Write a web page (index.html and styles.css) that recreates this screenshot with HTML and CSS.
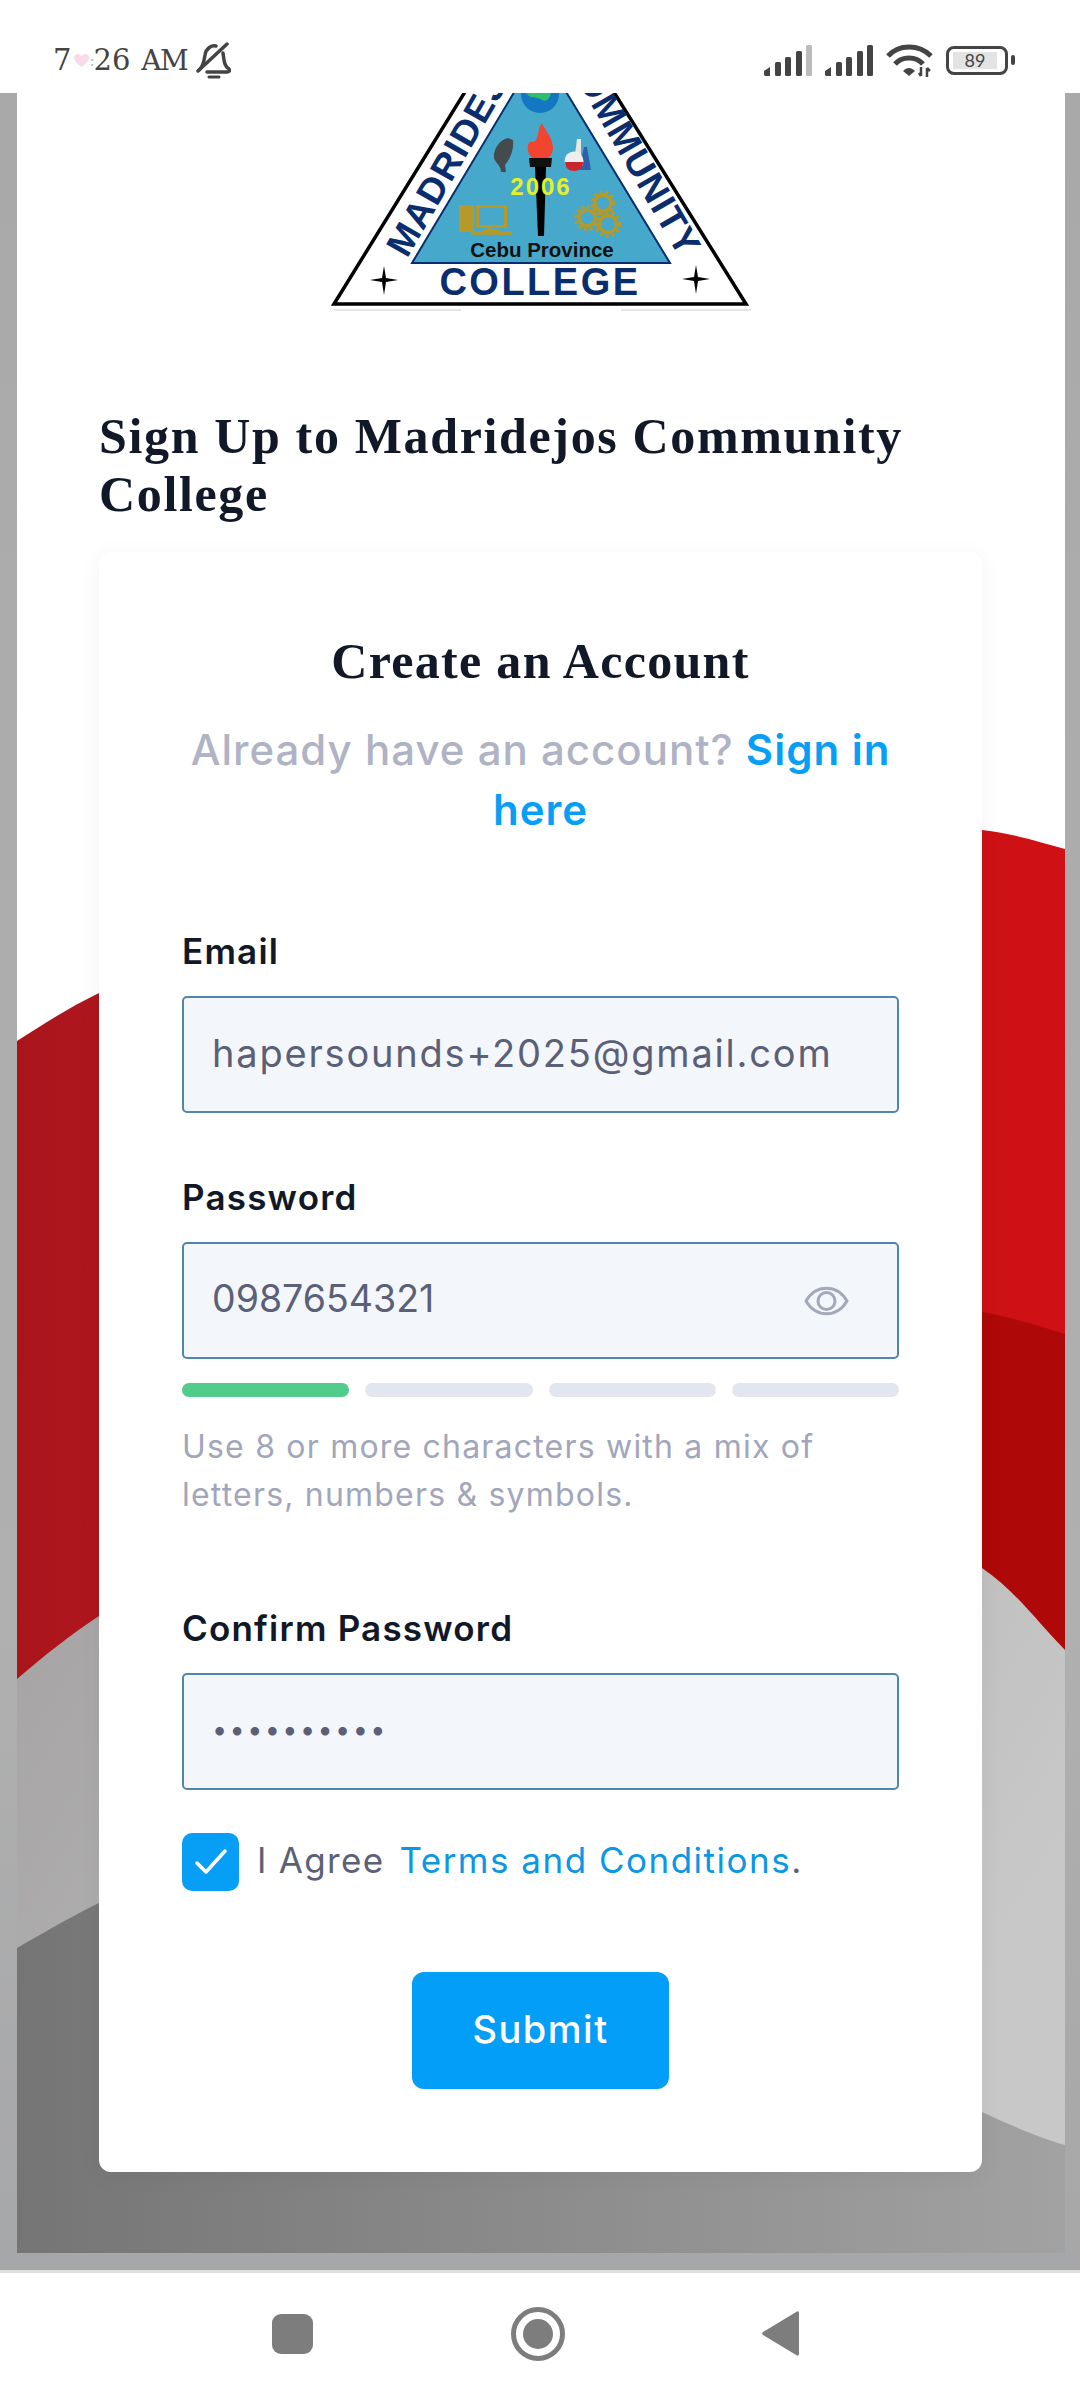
FILE: index.html
```html
<!DOCTYPE html>
<html lang="en">
  <head>
    <title>Sign Up</title>
    <meta charset="utf-8" />
    <link rel="stylesheet" href="styles.css">
  </head>
  <body>
    <div class="phone">
      <div class="status">
        <div class="clock">
          <span>7</span>
          <svg class="heart" width="15" height="14" viewBox="0 0 15 14"><path d="M7.5 14C2 10 0 7.500 0 4.300 0 1.500 3.800-1 7.500 3 11.200-1 15 1.500 15 4.300 15 7.500 13 10 7.500 14Z" fill="#f8dbe8"/></svg>
          <span class="colon">:</span>
          <span>26</span>
          <span class="ampm">AM</span>
          <svg class="bell" width="35" height="37" viewBox="0 0 35 37" fill="none" stroke="#444" stroke-width="3.500" stroke-linecap="round">
            <path d="M3 28C8 24 8 18 9 13 10 6 16 3 20 4"/>
            <path d="M27 11C28 18 28 24 33 27 34 29 33 30 31 30H11"/>
            <path d="M2 29 31 2"/>
            <path d="M13 35H23" stroke-width="3"/>
          </svg>
        </div>
        <div class="status-icons">
          <svg width="48" height="31" viewBox="0 0 48 31" fill="#444">
            <path d="M0 26 6 22V31H1L0 30Z"/>
            <rect x="11" y="17" width="6" height="14" rx="1.500"/>
            <rect x="21" y="12" width="6" height="19" rx="1.500"/>
            <rect x="32" y="6" width="6" height="25" rx="1.500"/>
            <rect x="42" y="0" width="6" height="31" rx="1.500" fill="#bbb"/>
          </svg>
          <svg width="48" height="31" viewBox="0 0 48 31" fill="#444">
            <path d="M0 26 6 22V31H1L0 30Z"/>
            <rect x="11" y="17" width="6" height="14" rx="1.500"/>
            <rect x="21" y="12" width="6" height="19" rx="1.500"/>
            <rect x="32" y="6" width="6" height="25" rx="1.500"/>
            <rect x="42" y="0" width="6" height="31" rx="1.500"/>
          </svg>
          <svg width="47" height="34" viewBox="0 0 47 34" fill="none" stroke="#444" stroke-width="5">
            <path d="M2 13C13 1 33 1 45 13"/>
            <path d="M9 21C16 13 30 13 37 21"/>
            <path d="M17 28 23 33 29 28C25 24 21 24 17 28Z" fill="#444" stroke="none"/>
            <path d="M35 24V33M33 30 35 33M41 34V25M41 25 44 28" stroke-width="2.500"/>
          </svg>
          <div class="battery">
            <div class="battery-body"><span class="battery-level">89</span></div>
            <div class="battery-nub"></div>
          </div>
        </div>
      </div>

      <div class="main">
        <div class="panel">
          <svg class="backdrop" viewBox="17 93 1048 2160" preserveAspectRatio="none">
            <defs>
              <linearGradient id="redFill" x1="0" y1="0" x2="1" y2="0">
                <stop offset="0" stop-color="#a9151b"/>
                <stop offset="0.1" stop-color="#b0171d"/>
                <stop offset="0.9" stop-color="#cc1216"/>
                <stop offset="1" stop-color="#d01014"/>
              </linearGradient>
              <linearGradient id="grayFill" x1="0" y1="0" x2="1" y2="0.4">
                <stop offset="0" stop-color="#a5a3a3"/>
                <stop offset="1" stop-color="#c8c8c8"/>
              </linearGradient>
              <linearGradient id="darkFill" x1="0" y1="0" x2="1" y2="0">
                <stop offset="0" stop-color="#757575"/>
                <stop offset="1" stop-color="#a2a2a2"/>
              </linearGradient>
            </defs>
            <rect x="17" y="93" width="1048" height="2160" fill="#fff"/>
            <path d="M17 1041C45 1023 70 1007 99 993L982 830C1015 834 1040 842 1065 849V1700H17Z" fill="url(#redFill)"/>
            <path d="M800 1296C880 1291 980 1306 1065 1334V1700H800Z" fill="#af0808"/>
            <path d="M17 1679C45 1655 70 1635 99 1616L982 1568C1015 1590 1040 1625 1065 1650V2253H17Z" fill="url(#grayFill)"/>
            <path d="M17 1948C45 1932 70 1917 99 1903L982 2112C1010 2125 1040 2138 1065 2145V2253H17Z" fill="url(#darkFill)"/>
          </svg>

          <svg class="logo" width="420" height="222" viewBox="330 93 420 222">
            <path d="M538-28 745 304H333Z" fill="#fff" stroke="#000" stroke-width="3.500"/>
            <path d="M539 49 669 263H411Z" fill="#46a9cb" stroke="#0a2d6e" stroke-width="2"/>
            <circle cx="539" cy="94" r="19" fill="#1477c4"/>
            <path d="M525 93H550C548 100 545 102 541 100 536 96 530 100 525 93Z" fill="#2fbf6c"/>
            <text class="logo-side" transform="translate(406 259) rotate(-60)">MADRIDEJOS</text>
            <text class="logo-side" text-anchor="end" transform="translate(679 259) rotate(60)">COMMUNITY</text>

            <path d="M541 123C544 131 551 136 552 147 552 153 549 158 546 158H532C528 156 526 150 527 145 529 139 533 144 535 140 538 134 537 128 541 123Z" fill="#f2452f"/>
            <path d="M528 158H551L550 167H529Z" fill="#111"/>
            <path d="M534 167H545L543 236H537Z" fill="#000"/>

            <path d="M507 138C498 140 492 150 493 158 494 163 500 165 500 172L505 172 504 165C510 158 513 148 512 140Z" fill="#444b4e"/>

            <path d="M576 139H580V170H572Z" fill="#e8e8e0"/>
            <path d="M583 147H586L590 170H578Z" fill="#2f5eaa"/>
            <circle cx="573" cy="161" r="9.500" fill="#eeeeee"/>
            <path d="M564 162H582C582 168 578 171 573 171 568 171 564 168 564 162Z" fill="#c9252b"/>

            <g fill="none" stroke="#b59a2a" stroke-width="3">
              <rect x="476.500" y="206.500" width="28" height="20"/>
              <path d="M470 233H511" stroke-width="3.500"/>
              <path d="M488 227V232M482 231H498"/>
              <circle cx="602" cy="203" r="8" stroke-width="3.500"/>
              <circle cx="602" cy="203" r="11" stroke-width="3" stroke-dasharray="3 3"/>
              <circle cx="586" cy="218" r="8" stroke-width="3.500"/>
              <circle cx="586" cy="218" r="11.500" stroke-width="3" stroke-dasharray="3 3"/>
              <circle cx="607" cy="224" r="8.500" stroke-width="3.500"/>
              <circle cx="607" cy="224" r="12" stroke-width="3" stroke-dasharray="3 3"/>
            </g>
            <rect x="458" y="205" width="15" height="27" fill="#b59a2a"/>

            <text class="logo-year" x="540" y="195" text-anchor="middle">2006</text>
            <text class="logo-place" x="541" y="257" text-anchor="middle">Cebu Province</text>
            <text class="logo-college" x="539" y="295" text-anchor="middle">COLLEGE</text>

            <path d="M383 266 385 278 397 280 385 282 383 295 381 282 369 280 381 278Z" fill="#000"/>
            <path d="M695 265 697 277 709 279 697 281 695 294 693 281 681 279 693 277Z" fill="#000"/>
            <path d="M333 310H460M620 310H750" stroke="#ddd" stroke-width="1.500"/>
          </svg>

          <h1 class="page-title">Sign Up to Madridejos Community College</h1>

          <div class="card">
            <h2 class="card-title">Create an Account</h2>
            <p class="card-sub">Already have an account? <a class="sign-in" href="#">Sign in here</a></p>

            <div class="label label-email">Email</div>
            <div class="input input-text">hapersounds+2025@gmail.com</div>

            <div class="label label-password">Password</div>
            <div class="input input-eye">
              <span>0987654321</span>
              <svg width="45" height="32" viewBox="0 0 45 32" fill="none" stroke="#a4a8ba" stroke-width="3">
                <path d="M2 16C12-1 33-1 43 16 33 33 12 33 2 16Z"/>
                <circle cx="22.500" cy="16" r="8.500"/>
              </svg>
            </div>
            <div class="meter">
              <div class="meter-bar meter-on"></div>
              <div class="meter-bar"></div>
              <div class="meter-bar"></div>
              <div class="meter-bar"></div>
            </div>
            <p class="hint">Use 8 or more characters with a mix of letters, numbers &amp; symbols.</p>

            <div class="label label-confirm">Confirm Password</div>
            <div class="input input-dots">••••••••••</div>

            <div class="agree">
              <div class="checkbox">
                <svg width="34" height="30" viewBox="0 0 34 30" fill="none" stroke="#fff" stroke-width="3.500" stroke-linecap="round" stroke-linejoin="round"><path d="M3 16 12 25 31 4"/></svg>
              </div>
              <span class="agree-text">I Agree</span>
              <span class="agree-link"><a href="#">Terms and Conditions</a>.</span>
            </div>

            <div class="submit-row">
              <button class="submit">Submit</button>
            </div>
          </div>
        </div>
      </div>

      <div class="nav">
        <div class="nav-square"></div>
        <div class="nav-circle"><div class="nav-dot"></div></div>
        <svg width="37" height="45" viewBox="0 0 37 45"><path d="M35 0.500C36 0 37 1 37 2V43C37 44 36 45 35 44.500L1 24C0 23 0 22 1 21Z" fill="#7d7d7d"/></svg>
      </div>
    </div>
  </body>
</html>
```

FILE: styles.css
```css
html {
  height: 100%;
}
body {
  margin: 0;
  padding: 0;
  background: #fff;
  font-family: "Inter", "Liberation Sans", sans-serif;
}

.phone {
  width: 1080px;
  height: 2400px;
  display: flex;
  flex-direction: column;
  overflow: hidden;
}

/* status bar */
.status {
  height: 93px;
  box-sizing: border-box;
  flex: none;
  padding: 27px 65px 0 53px;
  display: flex;
  align-items: center;
  justify-content: space-between;
  background: #fff;
  color: #444;
}
.clock {
  display: flex;
  align-items: center;
  font: 29px "DejaVu Serif", serif;
}
.heart {
  margin: 0 0 0 3px;
}
.colon {
  font-size: 16px;
  color: #bbb;
  width: 4px;
}
.ampm {
  margin-left: 11px;
  letter-spacing: -1.500px;
  font-size: 28px;
}
.bell {
  margin-left: 9px;
}
.status-icons {
  display: flex;
  align-items: center;
  gap: 13px;
}
.battery {
  display: flex;
  align-items: center;
  gap: 3px;
}
.battery-body {
  width: 62px;
  height: 29px;
  box-sizing: border-box;
  border: 3px solid #444;
  border-radius: 8px;
  padding: 3px 8px 3px 4px;
  display: flex;
}
.battery-level {
  flex: 1;
  background: #e3e3e3;
  font: 18px/17px "Lato", sans-serif;
  text-align: center;
  color: #444;
}
.battery-nub {
  width: 4px;
  height: 10px;
  background: #444;
  border-radius: 2px;
}

/* page */
.main {
  flex: 1;
  padding: 0 15px 17px 17px;
  background: linear-gradient(#a9a9a9, #b0b0b0 70%, #a6a7a9);
}
.panel {
  position: relative;
  height: 2160px;
  box-sizing: border-box;
  padding: 0 83px 83px 82px;
  overflow: hidden;
}
.backdrop {
  position: absolute;
  left: 0;
  top: 0;
  width: 100%;
  height: 100%;
}
.logo {
  position: relative;
  display: block;
  margin: 0 auto;
}
.logo-side {
  font: bold 37px "Liberation Sans", sans-serif;
  letter-spacing: 1px;
  fill: #0a2d6e;
}
.logo-year {
  font: bold 24px "Liberation Sans", sans-serif;
  letter-spacing: 2px;
  fill: #e3f02c;
}
.logo-place {
  font: bold 20.500px "Liberation Sans", sans-serif;
  fill: #111;
}
.logo-college {
  font: bold 38px "Liberation Sans", sans-serif;
  letter-spacing: 2.500px;
  fill: #0a2d6e;
}
.page-title {
  position: relative;
  margin: 92px 0 29px;
  font: bold 50px/58px "Liberation Serif", serif;
  letter-spacing: 1.650px;
  color: #111928;
}

.card {
  position: relative;
  background: #fff;
  border-radius: 12px;
  padding: 79px 83px 83px 83px;
  box-shadow: 0 4px 24px rgba(0, 0, 0, 0.05);
}
.card-title {
  margin: 0;
  font: bold 50px/60px "Liberation Serif", serif;
  letter-spacing: 1.300px;
  text-align: center;
  color: #111928;
}
.card-sub {
  margin: 29px 0 0;
  font-size: 42px;
  line-height: 60px;
  font-weight: 500;
  letter-spacing: 1px;
  text-align: center;
  color: #b0b3c4;
}
.sign-in {
  color: #069ff5;
  font-weight: 600;
  text-decoration: none;
}

.label {
  font-size: 35px;
  line-height: 48px;
  font-weight: 600;
  letter-spacing: 1.200px;
  color: #111928;
  margin-bottom: 21px;
}
.label-email {
  margin-top: 87px;
}
.label-password {
  margin-top: 60px;
}
.label-confirm {
  margin-top: 85px;
}

.input {
  height: 117px;
  box-sizing: border-box;
  border: 2px solid #4f87a8;
  border-radius: 5px;
  background: #f3f7fb;
  padding: 0 48px 4px 28px;
  display: flex;
  align-items: center;
  font-size: 37.500px;
  color: #5b6077;
}
.input-text {
  font-size: 38px;
  letter-spacing: 1.800px;
}
.input-eye {
  justify-content: space-between;
}
.input-eye svg {
  margin-top: 4px;
}
.input-dots {
  letter-spacing: 2.400px;
  font-size: 27px;
}

.meter {
  display: flex;
  gap: 16px;
  margin-top: 24px;
}
.meter-bar {
  flex: 1;
  height: 14px;
  border-radius: 7px;
  background: #e2e6ee;
}
.meter-on {
  background: #52cc8a;
}
.hint {
  margin: 26px 0 0;
  font-size: 32px;
  line-height: 48px;
  letter-spacing: 1.200px;
  color: #a2a6bb;
}

.agree {
  display: flex;
  align-items: center;
  margin-top: 43px;
  font-size: 35px;
  letter-spacing: 1.300px;
  color: #5b6077;
}
.checkbox {
  flex: none;
  width: 57px;
  height: 58px;
  border-radius: 10px;
  background: #069ff5;
  display: flex;
  align-items: center;
  justify-content: center;
}
.agree-text {
  margin: 0 0 4px 18px;
}
.agree-link {
  margin: 0 0 4px 15px;
  letter-spacing: 1.500px;
}
.agree-link a {
  color: #0a97e6;
  text-decoration: none;
}

.submit-row {
  display: flex;
  justify-content: center;
  margin-top: 81px;
}
.submit {
  width: 257px;
  height: 117px;
  border: 0;
  border-radius: 12px;
  padding: 0 0 4px;
  background: #039ef7;
  color: #fff;
  font: 500 38px "Inter", sans-serif;
  letter-spacing: 1.500px;
}

/* nav bar */
.nav {
  height: 130px;
  box-sizing: border-box;
  flex: none;
  border-top: 3px solid #e0e0dc;
  background: #fff;
  display: flex;
  align-items: center;
  padding: 0 281px 6px 272px;
  justify-content: space-between;
}
.nav-square {
  width: 41px;
  height: 40px;
  border-radius: 9px;
  background: #7d7d7d;
}
.nav-circle {
  width: 54px;
  height: 54px;
  box-sizing: border-box;
  border: 5px solid #7d7d7d;
  border-radius: 50%;
  display: flex;
  align-items: center;
  justify-content: center;
}
.nav-dot {
  width: 30px;
  height: 30px;
  border-radius: 50%;
  background: #7d7d7d;
}
```
